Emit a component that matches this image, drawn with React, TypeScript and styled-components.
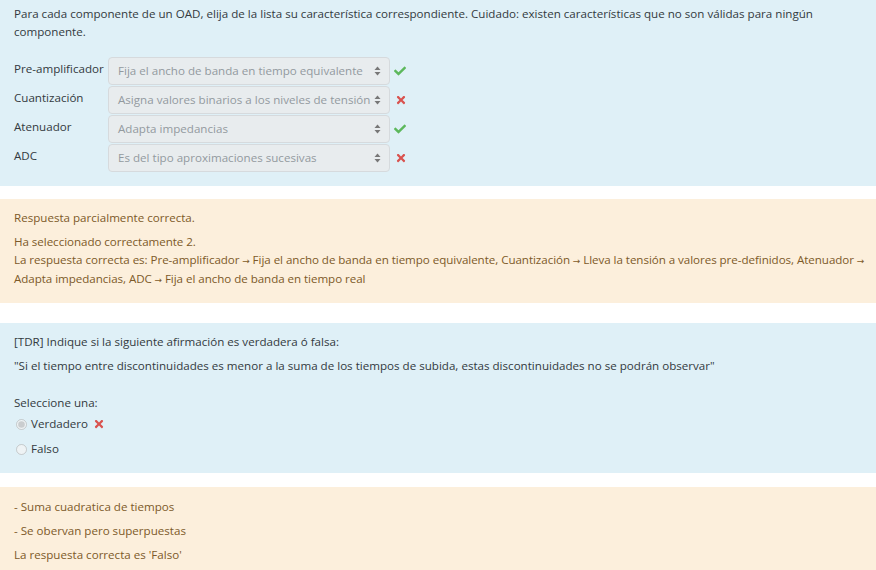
import React from 'react';
import styled, { createGlobalStyle } from 'styled-components';
import { FaCheck, FaTimes } from 'react-icons/fa';

const GlobalStyle = createGlobalStyle`
  html, body {
    margin: 0;
    padding: 0;
    background: #ffffff;
  }
  body {
    font-family: "Open Sans", "Noto Sans", sans-serif;
    font-size: 11.6px;
    line-height: 18px;
  }
`;

const Page = styled.div`
  display: flex;
  flex-direction: column;
`;

const Formulation = styled.div<{ top: number; bottom: number; gap?: number }>`
  background: #dff0f7;
  color: #333a40;
  padding: ${p => p.top}px 14px ${p => p.bottom}px 14px;
  margin-bottom: ${p => p.gap ?? 0}px;
`;

const Outcome = styled.div<{ top: number; bottom: number; gap?: number }>`
  background: #fcefdc;
  color: #7d5a29;
  padding: ${p => p.top}px 6px ${p => p.bottom}px 14px;
  margin-bottom: ${p => p.gap ?? 0}px;
`;

const Para = styled.p<{ after?: number; tight?: boolean }>`
  margin: 0 0 ${p => p.after ?? 6}px 0;
  letter-spacing: ${p => (p.tight ? '-0.05px' : 'normal')};
`;

const Arrow = styled.span`
  font-family: "DejaVu Sans", sans-serif;
  font-size: 9px;
`;

const MatchTable = styled.div`
  display: flex;
  flex-direction: column;
  gap: 1px;
`;

const MatchRow = styled.div`
  display: flex;
  align-items: flex-start;
`;

const Label = styled.div`
  width: 94px;
  padding-top: 3px;
`;

const Select = styled.div`
  width: 282px;
  height: 28px;
  box-sizing: border-box;
  border: 1px solid #d6dadd;
  border-radius: 4px;
  background: #e8ecee;
  color: #939a9f;
  display: flex;
  align-items: center;
  justify-content: space-between;
  padding: 0 8px 0 9px;
  white-space: nowrap;
  overflow: hidden;
`;

const Arrows = styled.svg`
  width: 7px;
  height: 10px;
  flex-shrink: 0;
`;

const Mark = styled.span<{ ok: boolean }>`
  display: inline-flex;
  align-items: center;
  color: ${p => (p.ok ? '#5cb85c' : '#d9534f')};
  font-size: 12px;
  margin-left: ${p => (p.ok ? 4 : 5)}px;
  height: 28px;
`;

const Options = styled.div`
  display: flex;
  flex-direction: column;
  gap: 7px;
`;

const Option = styled.label`
  display: flex;
  align-items: center;
  height: 18px;
`;

const Radio = styled.input`
  width: 11px;
  height: 11px;
  margin: 0 4px 0 2px;
`;

const Inline = styled.span`
  display: inline-flex;
  color: #d9534f;
  font-size: 12px;
  margin-left: 5px;
`;

const SelectArrows = () => (
  <Arrows viewBox="0 0 7 10">
    <path d="M3.5 0.5 L6.5 4 L0.5 4 Z" fill="#777" />
    <path d="M3.5 9.5 L6.5 6 L0.5 6 Z" fill="#777" />
  </Arrows>
);

const rows = [
  { label: 'Pre-amplificador', value: 'Fija el ancho de banda en tiempo equivalente', ok: true },
  { label: 'Cuantización', value: 'Asigna valores binarios a los niveles de tensión', ok: false },
  { label: 'Atenuador', value: 'Adapta impedancias', ok: true },
  { label: 'ADC', value: 'Es del tipo aproximaciones sucesivas', ok: false },
];

const To = () => <Arrow>{'\u00a0→ '}</Arrow>;

export default function App() {
  return (
    <Page>
      <GlobalStyle />
      <Formulation top={5} bottom={14} gap={13}>
        <Para after={16}>
          Para cada componente de un OAD, elija de la lista su característica correspondiente. Cuidado: existen características que no son válidas para ningún componente.
        </Para>
        <MatchTable>
          {rows.map(r => (
            <MatchRow key={r.label}>
              <Label>{r.label}</Label>
              <Select>
                <span>{r.value}</span>
                <SelectArrows />
              </Select>
              <Mark ok={r.ok}>{r.ok ? <FaCheck /> : <FaTimes />}</Mark>
            </MatchRow>
          ))}
        </MatchTable>
      </Formulation>

      <Outcome top={10} bottom={14} gap={20}>
        <Para>Respuesta parcialmente correcta.</Para>
        <Para after={0} tight>
          Ha seleccionado correctamente 2.
          <br />
          La respuesta correcta es: Pre-amplificador<To />Fija el ancho de banda en tiempo equivalente, Cuantización<To />Lleva la tensión a valores pre-definidos, Atenuador<To />Adapta impedancias, ADC<To />Fija el ancho de banda en tiempo real
        </Para>
      </Outcome>

      <Formulation top={10} bottom={15} gap={14}>
        <Para>[TDR] Indique si la siguiente afirmación es verdadera ó falsa:</Para>
        <Para after={19}>
          "Si el tiempo entre discontinuidades es menor a la suma de los tiempos de subida, estas discontinuidades no se podrán observar"
        </Para>
        <Para after={3}>Seleccione una:</Para>
        <Options>
          <Option>
            <Radio type="radio" name="tf" disabled defaultChecked />
            Verdadero
            <Inline><FaTimes /></Inline>
          </Option>
          <Option>
            <Radio type="radio" name="tf" disabled />
            Falso
          </Option>
        </Options>
      </Formulation>

      <Outcome top={11} bottom={14}>
        <Para>- Suma cuadratica de tiempos</Para>
        <Para>- Se obervan pero superpuestas</Para>
        <Para after={0}>La respuesta correcta es 'Falso'</Para>
      </Outcome>
    </Page>
  );
}
